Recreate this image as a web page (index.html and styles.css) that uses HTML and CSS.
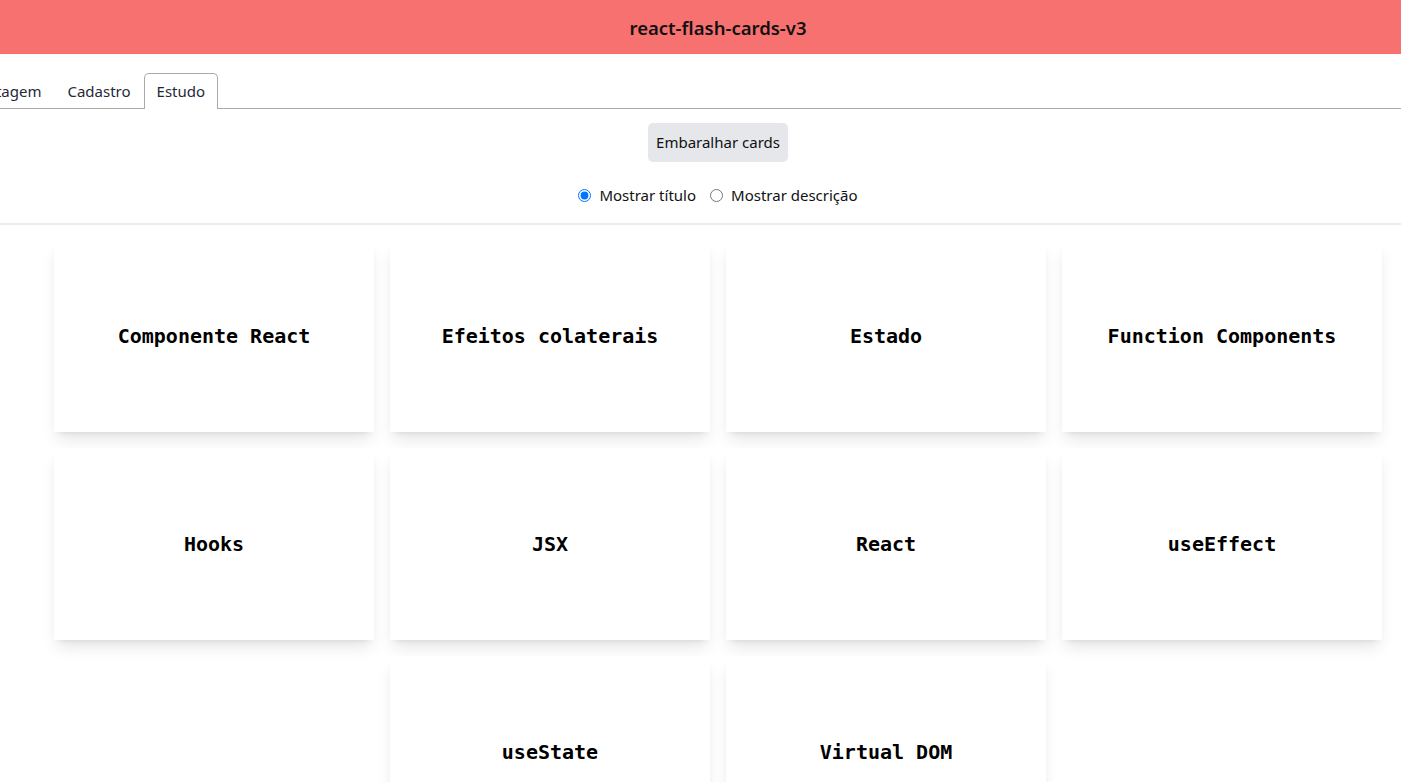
FILE: index.html
```html
<!DOCTYPE html>
<html lang="pt-BR">
<head>
<meta charset="utf-8">
<title>react-flash-cards-v3</title>
<link rel="stylesheet" href="styles.css">
</head>
<body>
<header class="app-header">react-flash-cards-v3</header>
<main class="page">
  <ul class="tab-list">
    <li class="tab">Listagem</li>
    <li class="tab">Cadastro</li>
    <li class="tab tab-selected">Estudo</li>
  </ul>
  <section class="panel">
    <div class="actions">
      <button class="shuffle-btn" type="button">Embaralhar cards</button>
    </div>
    <div class="radios">
      <label class="radio-label"><input type="radio" name="show" checked> Mostrar título</label>
      <label class="radio-label"><input type="radio" name="show"> Mostrar descrição</label>
    </div>
  </section>
</main>
<div class="divider"></div>
<main class="page">
  <div class="cards">
    <div class="card">Componente React</div>
    <div class="card">Efeitos colaterais</div>
    <div class="card">Estado</div>
    <div class="card">Function Components</div>
    <div class="card">Hooks</div>
    <div class="card">JSX</div>
    <div class="card">React</div>
    <div class="card">useEffect</div>
    <div class="card">useState</div>
    <div class="card">Virtual DOM</div>
  </div>
</main>
</body>
</html>
```
FILE: styles.css
```css
html, body {
  margin: 0;
  padding: 0;
  background: #ffffff;
  overflow: hidden;
}
body {
  font-family: "Noto Sans", "Open Sans", sans-serif;
  color: #111;
  width: 1401px;
  height: 782px;
}
.app-header {
  height: 54px;
  background: #f87171;
  display: flex;
  align-items: center;
  justify-content: center;
  font-size: 18.5px;
  font-weight: 600;
  color: #111;
  padding-left: 35px;
}
.page {
  width: 1436px;
}
.tab-list {
  list-style: none;
  margin: 18px 0 0 -36px;
  padding: 0;
  border-bottom: 1px solid #aaaaaa;
  display: flex;
  font-size: 15px;
}
.tab {
  padding: 6px 12px;
  line-height: 23px;
  border: 1px solid transparent;
  border-bottom: none;
  position: relative;
  bottom: -1px;
  color: #1f2937;
}
.tab-selected {
  background: #fff;
  border-color: #aaaaaa;
  border-radius: 5px 5px 0 0;
}
.panel {
  display: flex;
  flex-direction: column;
  align-items: center;
  padding-top: 14px;
}
.shuffle-btn {
  font-family: inherit;
  font-size: 15px;
  background: #e5e7eb;
  border: none;
  border-radius: 5px;
  padding: 8px 8px;
  line-height: 23px;
  color: #111;
}
.radios {
  display: flex;
  gap: 14px;
  margin-top: 23px;
  font-size: 15px;
}
.radio-label {
  display: flex;
  align-items: center;
  gap: 4px;
}
.radio-label input {
  margin: 0 4px 0 0;
  width: 13px;
  height: 13px;
  accent-color: #0075ff;
}
.divider {
  margin-top: 18px;
  height: 2px;
  background: #ececec;
  width: 100%;
}
.cards {
  display: flex;
  flex-wrap: wrap;
  justify-content: center;
  gap: 16px;
  padding-top: 15px;
}
.card {
  width: 320px;
  height: 192px;
  background: #fff;
  box-shadow: 0 10px 15px -3px rgba(0,0,0,0.1), 0 4px 6px -4px rgba(0,0,0,0.1);
  display: flex;
  align-items: center;
  justify-content: center;
  font-family: "DejaVu Sans Mono", "Liberation Mono", monospace;
  font-weight: bold;
  font-size: 20px;
  color: #000;
}
```
